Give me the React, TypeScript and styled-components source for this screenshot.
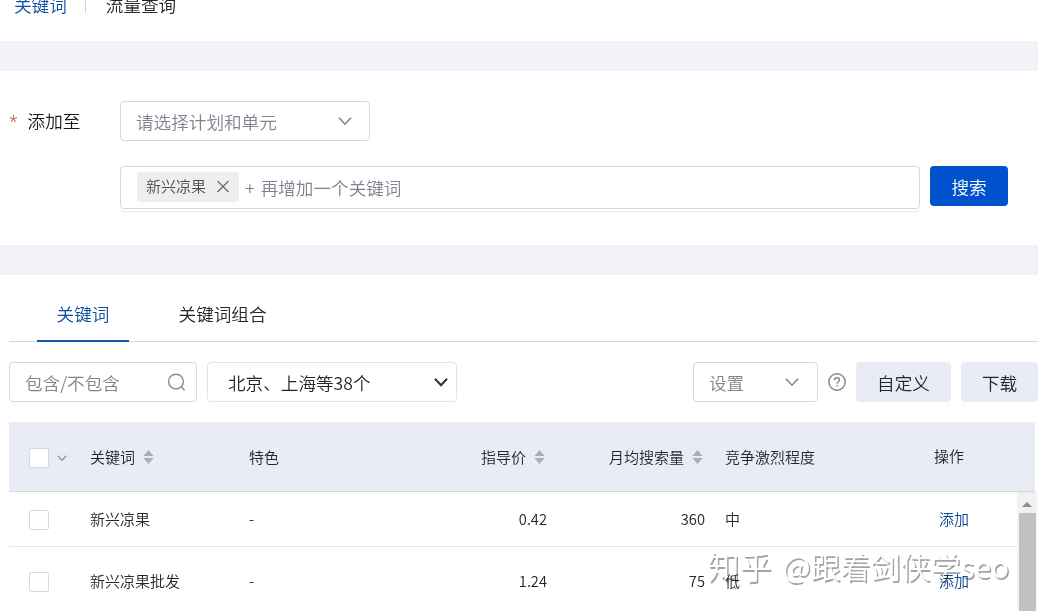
import styled, { createGlobalStyle } from 'styled-components';

type Keyword = {
  name: string;
  price: string;
  searches: string;
  competition: string;
};

const keywordList: Keyword[] = [
  { name: '新兴凉果', price: '0.42', searches: '360', competition: '中' },
  { name: '新兴凉果批发', price: '1.24', searches: '75', competition: '低' },
];

const Chevron = (props: { size: number; color: string; weight?: number }) => (
  <svg width={props.size} height={props.size} viewBox='0 0 14 14' fill='none'>
    <path d='M1 3.8L7 10.2L13 3.8' stroke={props.color} strokeWidth={props.weight || 1.5} />
  </svg>
);

const SortIcon = () => (
  <svg width='11' height='14' viewBox='0 0 11 14' fill='#a9adbb'>
    <path d='M5.5 0L10.6 6H0.4Z' />
    <path d='M5.5 14L10.6 8H0.4Z' />
  </svg>
);

const SearchIcon = () => (
  <svg width='20' height='20' viewBox='0 0 20 20' fill='none' stroke='#858a93' strokeWidth='1.4'>
    <circle cx='10' cy='9.6' r='7.4' />
    <path d='M15.2 14.8L18.6 18.2' />
  </svg>
);

const CloseIcon = () => (
  <svg width='12' height='12' viewBox='0 0 12 12' stroke='#666' strokeWidth='1.2'>
    <path d='M0.5 0L11.5 11M11.5 0L0.5 11' />
  </svg>
);

const HelpIcon = () => (
  <svg width='18' height='18' viewBox='0 0 18 18' fill='none' stroke='#80848e' strokeWidth='1.4'>
    <circle cx='9' cy='9' r='8.2' />
    <path d='M6.5 7.2C6.5 5.7 7.5 4.7 9 4.7C10.5 4.7 11.5 5.6 11.5 6.9C11.5 8.6 9 8.8 9 10.8' />
    <path d='M9 12.1V13.6' />
  </svg>
);

const App = () => {
  return (
    <Page>
      <GlobalStyle />

      <TopNav>
        <NavItem $active>关键词</NavItem>
        <NavDivider />
        <NavItem>流量查询</NavItem>
      </TopNav>

      <SearchForm>
        <FormRow>
          <FormLabel>
            <Required>*</Required>添加至
          </FormLabel>
          <SelectBox $width={250} $inset={17}>
            <BoxText>请选择计划和单元</BoxText>
            <Chevron size={14} color='#7d828c' />
          </SelectBox>
        </FormRow>
        <KeywordRow>
          <KeywordField>
            <KeywordInput>
              <Tag>
                <TagText>新兴凉果</TagText>
                <CloseIcon />
              </Tag>
              <InputHint>
                <span>+</span>
                <span>再增加一个关键词</span>
              </InputHint>
            </KeywordInput>
          </KeywordField>
          <SearchButton>
            <BoxText>搜索</BoxText>
          </SearchButton>
        </KeywordRow>
      </SearchForm>

      <ResultPanel>
        <TabBar>
          <Tab $active>关键词</Tab>
          <Tab>关键词组合</Tab>
        </TabBar>

        <Toolbar>
          <FilterInput>
            <BoxText>包含/不包含</BoxText>
            <SearchIcon />
          </FilterInput>
          <RegionSelect>
            <BoxText>北京、上海等38个</BoxText>
            <Chevron size={14} color='#2f333b' weight={2.1} />
          </RegionSelect>
          <Spacer />
          <SelectBox $width={125} $inset={18}>
            <BoxText>设置</BoxText>
            <Chevron size={14} color='#7d828c' />
          </SelectBox>
          <HelpIcon />
          <PlainButton $width={95}>
            <BoxText>自定义</BoxText>
          </PlainButton>
          <PlainButton $width={77}>
            <BoxText>下载</BoxText>
          </PlainButton>
        </Toolbar>

        <TableHead>
          <CheckCell>
            <Checkbox />
            <Chevron size={10} color='#8f94a3' weight={1.7} />
          </CheckCell>
          <Cell>
            关键词
            <SortIcon />
          </Cell>
          <Cell>特色</Cell>
          <Cell $right $inset={2}>
            指导价
            <SortIcon />
          </Cell>
          <Cell $right $inset={2}>
            月均搜索量
            <SortIcon />
          </Cell>
          <Cell $indent={20}>竞争激烈程度</Cell>
          <HeadAction>操作</HeadAction>
        </TableHead>

        <TableBody>
          <Rows>
            {keywordList.map((item) => (
              <Row key={item.name}>
                <CheckCell>
                  <Checkbox />
                </CheckCell>
                <Cell>{item.name}</Cell>
                <NumberCell>-</NumberCell>
                <NumberCell $right>{item.price}</NumberCell>
                <NumberCell $right>{item.searches}</NumberCell>
                <Cell $indent={20}>{item.competition}</Cell>
                <AddLink>添加</AddLink>
              </Row>
            ))}
          </Rows>
          <Scrollbar>
            <ScrollArrow>
              <svg width='10' height='5' viewBox='0 0 10 5' fill='#8b8b8b'>
                <path d='M5 0L10 5H0Z' />
              </svg>
            </ScrollArrow>
            <ScrollThumb />
          </Scrollbar>
        </TableBody>
      </ResultPanel>

      <Watermark>
        <SiteName>知乎</SiteName>
        <span>@跟着剑侠学seo</span>
      </Watermark>
    </Page>
  );
};

export default App;

const GlobalStyle = createGlobalStyle`
  * {
    box-sizing: border-box;
  }

  body {
    margin: 0;
    background: #fff;
    overflow: hidden;
  }
`;

const Page = styled.div`
  position: relative;
  display: flex;
  flex-direction: column;
  width: 1038px;
  height: 611px;
  overflow: hidden;
  background: #fff;
  color: #22262d;
  font-family: 'Noto Sans CJK SC', sans-serif;
  font-size: 17.6px;
  font-weight: 350;
  line-height: 26px;
  white-space: nowrap;

  svg {
    flex: none;
  }
`;

const TopNav = styled.div`
  display: flex;
  flex: none;
  align-items: flex-start;
  height: 41px;
  padding-left: 14px;
`;

const NavItem = styled.div<{ $active?: boolean }>`
  margin-top: -8px;
  color: ${(props) => (props.$active ? '#0f4fa3' : '#22262d')};
`;

const NavDivider = styled.div`
  width: 1px;
  height: 13px;
  margin: 0 20px 0 18px;
  background: #d0d3d9;
`;

const SearchForm = styled.div`
  flex: none;
  height: 234px;
  padding-top: 30px;
  border-top: 30px solid #f2f3f8;
  border-bottom: 30px solid #f2f3f8;
`;

const FormRow = styled.div`
  display: flex;
  align-items: center;
`;

const FormLabel = styled.div`
  display: flex;
  width: 120px;
  padding-left: 9px;
  color: #16191e;
`;

const Required = styled.span`
  width: 18.6px;
  color: #c8322d;
  font-family: 'Open Sans', sans-serif;
  font-size: 16px;
`;

const SelectBox = styled.div<{ $width: number; $inset: number }>`
  display: flex;
  align-items: center;
  justify-content: space-between;
  width: ${(props) => props.$width}px;
  height: 40px;
  padding: 0 ${(props) => props.$inset}px 0 15px;
  border: 1px solid #d3d7de;
  border-radius: 4px;
  color: #7f8590;
`;

const BoxText = styled.span`
  padding-top: 2px;
`;

const KeywordRow = styled.div`
  display: flex;
  gap: 10px;
  margin: 25px 0 0 120px;
`;

const KeywordField = styled.div`
  width: 800px;
  height: 46px;
  border-bottom: 1px solid #e3ebf0;
  border-radius: 4px;
`;

const KeywordInput = styled.div`
  display: flex;
  height: 43px;
  padding: 5px 16px;
  border: 1px solid #d3dade;
  border-radius: 4px;
`;

const Tag = styled.div`
  display: flex;
  align-items: center;
  gap: 11px;
  width: 102px;
  height: 30px;
  padding-left: 9px;
  border-radius: 2px;
  background: #eee;
  color: #4c4c4c;
  font-size: 15px;
`;

const TagText = styled.span`
  width: 60px;
  padding-bottom: 3px;
`;

const InputHint = styled.div`
  display: flex;
  gap: 6px;
  padding: 3px 0 0 6px;
  color: #7f8590;
`;

const SearchButton = styled.div`
  display: flex;
  align-items: center;
  justify-content: center;
  width: 78px;
  height: 40px;
  border-radius: 4px;
  background: #0052cc;
  color: #fff;
`;

const ResultPanel = styled.div`
  display: flex;
  flex: 1;
  flex-direction: column;
  padding-left: 9px;
`;

const TabBar = styled.div`
  display: flex;
  flex: none;
  gap: 30px;
  height: 67px;
  padding-left: 28px;
  box-shadow: inset 0 -1px #d3d7de;
`;

const Tab = styled.div<{ $active?: boolean }>`
  height: 67px;
  padding: 26px 19.6px 0;
  border-bottom: 2px solid ${(props) => (props.$active ? '#1457a8' : 'transparent')};
  color: ${(props) => (props.$active ? '#0f4fa3' : '#22262d')};
`;

const Toolbar = styled.div`
  display: flex;
  flex: none;
  align-items: center;
  gap: 10px;
  margin: 20px 0;
`;

const FilterInput = styled.div`
  display: flex;
  align-items: center;
  justify-content: space-between;
  width: 188px;
  height: 40px;
  padding: 0 10px 0 15px;
  border: 1px solid #d6d9df;
  border-radius: 4px;
  color: #7f8590;
`;

const RegionSelect = styled.div`
  display: flex;
  align-items: center;
  justify-content: space-between;
  width: 250px;
  height: 40px;
  padding: 0 8px 0 20px;
  border: 1px solid #e2e4e8;
  border-radius: 4px;
`;

const Spacer = styled.div`
  flex: 1;
`;

const PlainButton = styled.div<{ $width: number }>`
  display: flex;
  align-items: center;
  justify-content: center;
  width: ${(props) => props.$width}px;
  height: 40px;
  border-radius: 4px;
  background: #e9ecf5;
`;

const TableHead = styled.div`
  display: grid;
  flex: none;
  grid-template-columns: 81px 159px 140px 158px 158px 229px 1fr;
  align-items: center;
  width: 1026px;
  height: 70px;
  border-bottom: 1px solid #d3d6df;
  background: #e9ecf5;
  font-size: 15px;
`;

const CheckCell = styled.div`
  display: flex;
  align-items: center;
  gap: 8px;
  padding: 2px 0 0 20px;
`;

const Checkbox = styled.span`
  width: 20px;
  height: 20px;
  border: 1px solid #d6d9df;
  border-radius: 2px;
  background: #fff;
`;

const Cell = styled.div<{ $right?: boolean; $inset?: number; $indent?: number }>`
  display: flex;
  align-items: center;
  gap: 8px;
  justify-content: ${(props) => (props.$right ? 'flex-end' : 'flex-start')};
  padding-right: ${(props) => props.$inset || 0}px;
  padding-left: ${(props) => props.$indent || 0}px;
`;

const NumberCell = styled(Cell)`
  font-size: 14.7px;
`;

const HeadAction = styled.div`
  padding-bottom: 2px;
`;

const TableBody = styled.div`
  display: flex;
  flex: none;
  width: 1028px;
`;

const Rows = styled.div`
  width: 1008px;
`;

const Row = styled.div`
  display: grid;
  grid-template-columns: 81px 159px 140px 158px 158px 234px 1fr;
  align-items: center;
  height: 55px;
  border-bottom: 1px solid #e4e6ea;
  font-size: 15px;

  &:last-child {
    height: 69px;
  }
`;

const AddLink = styled.div`
  color: #0f4593;
`;

const Scrollbar = styled.div`
  width: 20px;
  background: #f5f5f5;
`;

const ScrollArrow = styled.div`
  display: flex;
  align-items: center;
  justify-content: center;
  height: 21px;
  padding-top: 3px;
  background: #f1f1f1;
`;

const ScrollThumb = styled.div`
  height: 120px;
  margin: 0 1px 0 2px;
  background: #c1c1c1;
`;

const Watermark = styled.div`
  position: absolute;
  right: 29px;
  bottom: 23px;
  display: flex;
  gap: 11px;
  color: #fff;
  font-size: 30px;
  line-height: 46px;
  text-shadow: 1.5px 1.5px 0.5px rgba(0, 0, 0, 0.36);
  mix-blend-mode: multiply;
`;

const SiteName = styled.span`
  font-size: 32px;
`;
